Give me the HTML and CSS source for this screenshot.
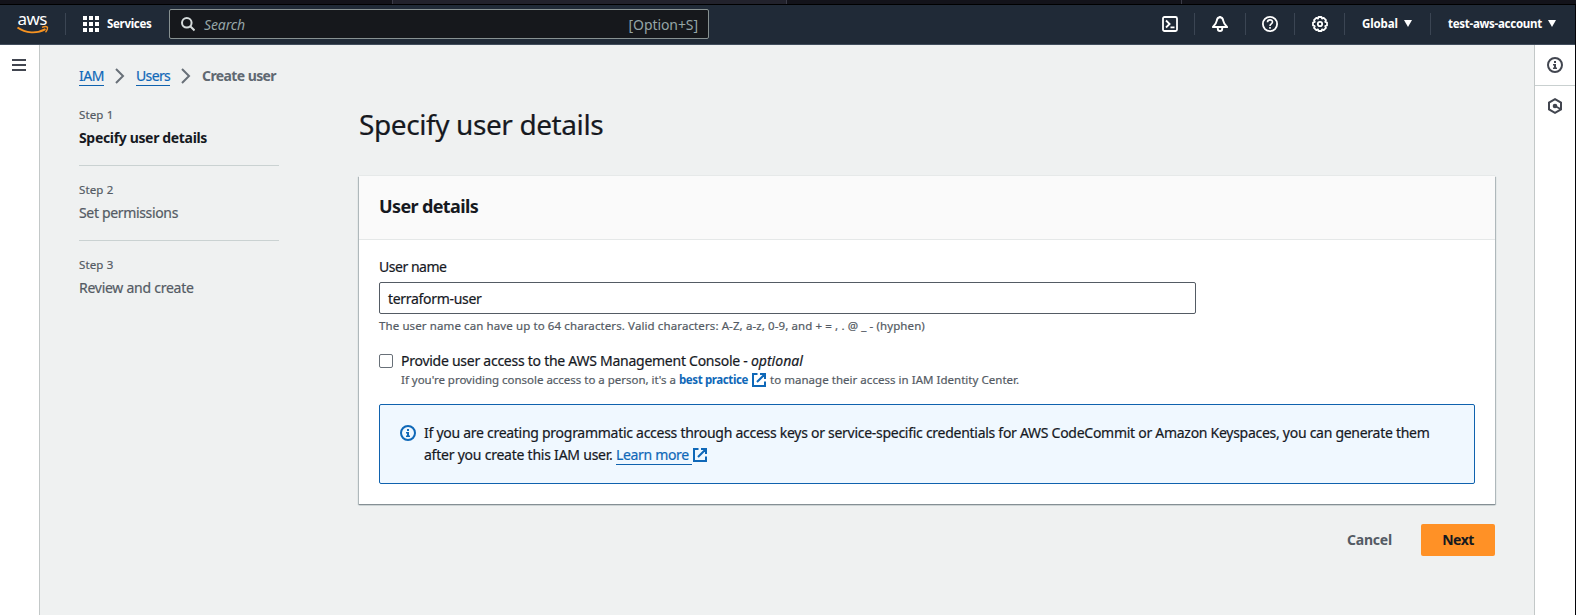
FILE: index.html
```
<!DOCTYPE html>
<html lang="en">
<head>
<meta charset="utf-8">
<title>Create user | IAM</title>
<link rel="stylesheet" href="styles.css">
</head>
<body>
<svg class="defs" width="0" height="0">
  <symbol id="external" viewBox="0 0 14 14"><path d="M5.5 1H1v12h12V8.5M8 1h5v5M13 1 5 9" fill="none" stroke="currentColor" stroke-width="2"/></symbol>
  <symbol id="info" viewBox="0 0 16 16"><circle cx="8" cy="8" r="7" fill="none" stroke="currentColor" stroke-width="2"/><path d="M7 4h2v2H7zM6 7h3v3.500h1V12H6v-1.500h1V8.500H6z" fill="currentColor"/></symbol>
  <symbol id="chevron" viewBox="0 0 10 16"><path d="m1 1 7 7-7 7" fill="none" stroke="currentColor" stroke-width="2"/></symbol>
</svg>
<div class="window">
  <div class="tabstrip"><i class="tab-active"></i><i class="tab-next"></i></div>
  <header class="nav">
    <svg class="logo" width="32" height="20" viewBox="0 0 32 20">
      <text class="logo-text" x="0.500" y="10.500" textLength="30">aws</text>
      <path d="M.5 13.500C8.500 19.300 20 20 28.500 15.200" fill="none" stroke="#f79321" stroke-width="1.900"/>
      <path d="M25 13.300c2.200-.8 4.700-.7 5.300-.2s-.1 3.600-1.800 5.200" fill="none" stroke="#f79321" stroke-width="1.400"/>
    </svg>
    <i class="rule rule-logo"></i>
    <div class="services">
      <svg width="16" height="16" viewBox="0 0 16 16" fill="#fff"><path d="M0 0h4v4H0zM6 0h4v4H6zM12 0h4v4h-4zM0 6h4v4H0zM6 6h4v4H6zM12 6h4v4h-4zM0 12h4v4H0zM6 12h4v4H6zM12 12h4v4h-4z"/></svg>
      <span class="services-text">Services</span>
    </div>
    <div class="search">
      <svg class="lens" width="14" height="15" viewBox="0 0 14 15" fill="none" stroke="#d5dbdb" stroke-width="2"><circle cx="5.800" cy="5.800" r="4.800"/><path d="m9 9 4.500 4.500"/></svg>
      <span class="search-text">Search</span>
      <span class="search-key">[Option+S]</span>
    </div>
    <div class="tools">
      <span class="tool"><svg width="16" height="16" viewBox="0 0 16 16" fill="none" stroke="#fff" stroke-width="1.800"><rect x="1" y="1" width="14" height="14" rx="1.500"/><path d="m4 4.500 3.600 3.500L4 11.500M8.500 11.300h4"/></svg></span>
      <span class="tool"><svg width="16" height="16" viewBox="0 0 16 16" fill="none" stroke="#fff" stroke-width="1.900" stroke-linejoin="round"><path d="M8 1.300c-2 0-3 1.600-3.300 3.600C4.400 7 3 9.100.9 11h14.200C13 9.100 11.600 7 11.300 4.900 11 2.900 10 1.300 8 1.300zM5.800 11v1.700c0 3 4.400 3 4.400 0V11M8 0v1"/></svg></span>
      <span class="tool"><svg width="16" height="16" viewBox="0 0 16 16" fill="none" stroke="#fff" stroke-width="1.800"><circle cx="8" cy="8" r="7.100"/><path d="M5.500 6.300c0-3.300 5-3.200 5-.2C10.500 8 8 7.800 8 9.900M8 11v1.800" stroke-width="1.600"/></svg></span>
      <span class="tool"><svg width="16" height="16" viewBox="0 0 16 16" fill="none" stroke="#fff"><path stroke-width="1.800" stroke-linejoin="round" d="M6.500 1h3l.5 1.600 1.700-.8 2.300 2.400-.8 1.600 1.800.7v3l-1.800.7.8 1.700-2.300 2.300-1.700-.8-.5 1.600h-3L6 13.400l-1.700.8L2 11.900l.8-1.700L1 9.500v-3l1.800-.7L2 4.200l2.300-2.400 1.700.8z"/><circle cx="8" cy="8" r="2.200" stroke-width="1.800"/></svg></span>
      <span class="region"><span class="region-text">Global</span><svg width="8" height="7" viewBox="0 0 8 7"><path d="M0 0h8L4 7z" fill="#fff"/></svg></span>
      <span class="account"><span class="account-text">test-aws-account</span><svg width="8" height="7" viewBox="0 0 8 7"><path d="M0 0h8L4 7z" fill="#fff"/></svg></span>
    </div>
  </header>
  <div class="body">
    <aside class="left-rail"><svg width="14" height="12" viewBox="0 0 14 12" fill="#424650"><path d="M0 0h14v2H0zM0 5h14v2H0zM0 10h14v2H0z"/></svg></aside>
    <main class="main">
      <nav class="crumbs">
        <a class="crumb crumb-iam">IAM</a>
        <svg class="sep" width="10" height="16"><use href="#chevron"/></svg>
        <a class="crumb crumb-users">Users</a>
        <svg class="sep" width="10" height="16"><use href="#chevron"/></svg>
        <span class="crumb-current">Create user</span>
      </nav>
      <div class="wizard">
        <ol class="steps">
          <li class="step"><div class="step-no">Step 1</div><div class="step-name active">Specify user details</div></li>
          <li class="step"><div class="step-no">Step 2</div><div class="step-name">Set permissions</div></li>
          <li class="step"><div class="step-no">Step 3</div><div class="step-name review">Review and create</div></li>
        </ol>
        <div class="form">
          <h1 class="title">Specify user details</h1>
          <section class="card">
            <div class="card-head"><h2 class="card-title">User details</h2></div>
            <div class="card-body">
              <label class="label">User name</label>
              <div class="input"><span>terraform-user</span></div>
              <div class="hint">The user name can have up to 64 characters. Valid characters: A-Z, a-z, 0-9, and + = , . @ _ - (hyphen)</div>
              <div class="check">
                <i class="box"></i>
                <div>
                  <div class="check-label">Provide user access to the AWS Management Console - <em>optional</em></div>
                  <div class="check-desc">If you're providing console access to a person, it's a <a class="best">best practice</a><svg class="ext" width="14" height="14"><use href="#external"/></svg><span class="desc-end">to manage their access in IAM Identity Center.</span></div>
                </div>
              </div>
              <div class="alert">
                <svg class="alert-icon" width="16" height="16"><use href="#info"/></svg>
                <div><div class="alert-one">If you are creating programmatic access through access keys or service-specific credentials for AWS CodeCommit or Amazon Keyspaces, you can generate them</div>
                <div class="alert-two"><span class="after">after you create this IAM user. </span><a class="learn">Learn more </a><svg width="14" height="14"><use href="#external"/></svg></div></div>
              </div>
            </div>
          </section>
          <div class="actions"><a class="cancel">Cancel</a><a class="next">Next</a></div>
        </div>
      </div>
    </main>
    <aside class="right-rail">
      <div class="rail-item"><svg width="16" height="16"><use href="#info"/></svg></div>
      <div class="rail-item last"><svg width="16" height="16" viewBox="0 0 16 16"><path d="M8 1.200 14 4.600v6.800L8 14.800 2 11.400V4.600z" fill="none" stroke="currentColor" stroke-width="2"/><circle cx="8" cy="8" r="2.300" fill="currentColor"/><path d="m8 8 5.500 3" stroke="currentColor" stroke-width="1.800"/></svg></div>
    </aside>
  </div>
</div>
</body>
</html>
```
FILE: styles.css
```
* { box-sizing: border-box; }
body { margin: 0; font: 14px/22px "Noto Sans", "Open Sans", sans-serif; color: #16191f; background: #040409; -webkit-text-stroke: .2px; }
svg { display: block; flex: none; }
h1, h2, ol { margin: 0; padding: 0; }
ol { list-style: none; }
.defs { position: absolute; }
.window { display: flex; flex-direction: column; width: 1576px; height: 615px; overflow: hidden; white-space: nowrap; }

.tabstrip { display: flex; flex: none; height: 5px; background: #13131a; border-bottom: 1px solid #000; padding-left: 392px; }
.tab-active { width: 395px; background: #22222c; border: solid #3c3c48; border-width: 0 1px; }
.tab-next { width: 395px; border-right: 1px solid #3c3c48; }

.nav { display: flex; flex: none; align-items: center; height: 40px; width: 1575px; padding: 0 19px 2px 17px; background: #202a37; border-bottom: 1px solid #414d5c; color: #fff; font-size: 11.5px; font-weight: 700; -webkit-text-stroke: 0; }
.logo { overflow: visible; }
.logo-text { font: 400 17px "Noto Sans", sans-serif; fill: #fff; }
.rule { width: 1px; height: 22px; background: #3b4553; }
.rule-logo { margin: 0 17px 0 16px; }
.services { display: flex; align-items: center; gap: 8px; width: 86px; }
.services-text { letter-spacing: -.3px; }
.search { display: flex; align-items: center; width: 540px; height: 30px; padding: 0 10px 0 11px; background: #16181c; border: 1px solid #879191; border-radius: 2px; color: #95a5a6; font-size: 14px; font-weight: 400; }
.lens { margin-top: 1px; }
.search-text { margin: 2px auto 0 9px; font-style: italic; letter-spacing: -.12px; }
.search-key { margin-top: 2px; letter-spacing: -.08px; }
.tools { display: flex; margin-left: auto; height: 22px; }
.tool { display: flex; align-items: center; width: 50px; padding-left: 17px; border-right: 1px solid #3b4553; }
.tool:first-child { padding-left: 16px; width: 49px; }
.tool:nth-child(2) { width: 51px; }
.tool:nth-child(3) { width: 49px; padding-left: 16px; }
.region, .account { display: flex; align-items: center; gap: 6px; }
.region { width: 86px; padding-left: 17px; border-right: 1px solid #3b4553; }
.account { padding-left: 17px; }
.region-text { letter-spacing: -.13px; }
.account-text { letter-spacing: -.27px; }

.body { display: flex; flex: 1; width: 1575px; }
.left-rail { width: 40px; padding: 14px 0 0 12px; background: #fff; border-right: 1px solid #c3c8c8; }
.main { flex: 1; padding: 20px 39px 0; background: #eff1f1; }
.right-rail { width: 41px; background: #fff; border-left: 1px solid #c3c8c8; color: #424650; }
.rail-item { display: flex; align-items: center; justify-content: center; height: 41px; border-bottom: 1px solid #c9d0d0; }
.rail-item.last { height: 39px; border: 0; }

.crumbs { display: flex; height: 22px; }
.crumb { height: 21px; border-bottom: 1px solid #0f62ae; color: #0f68b8; }
.crumb-iam { width: 25px; letter-spacing: -.46px; }
.crumb-users { width: 34px; letter-spacing: -.64px; }
.sep { margin: 3px 11px 0; color: #687078; }
.crumb-current { color: #606871; font-weight: 700; letter-spacing: -.59px; -webkit-text-stroke: 0; }

.wizard { display: flex; padding-top: 19px; }
.steps { width: 200px; margin-right: 80px; }
.step { height: 75px; padding-top: 1px; color: #545b64; }
.step:not(:last-child) .step-name { border-bottom: 1px solid #cad2d2; }
.step-no { font-size: 11.5px; line-height: 16px; letter-spacing: .14px; }
.step-name { height: 39px; margin-top: 4px; letter-spacing: -.34px; }
.step-name.active { color: #16191f; font-weight: 700; -webkit-text-stroke: 0; }
.step-name.review { letter-spacing: -.26px; }

.form { width: 1136px; }
.title { font-size: 28px; font-weight: 400; line-height: 36px; letter-spacing: -.4px; }
.card { height: 328px; margin-top: 34px; background: #fff; box-shadow: 0 1px 1px #858f94, 0 -1px 0 #e6e9e9, 1px 1px 1px #b9c1c3, -1px 1px 1px #b9c1c3; }
.card-head { height: 64px; padding: 19px 20px; background: #fafafa; border-bottom: 1px solid #e5e8e8; }
.card-title { font-size: 18px; line-height: 22px; letter-spacing: -.63px; -webkit-text-stroke: 0; }
.card-body { padding: 16px 20px 20px; }
.label { display: block; letter-spacing: -.47px; }
.input { width: 817px; height: 32px; margin-top: 4px; padding: 5px 8px; border: 1px solid #545b64; border-radius: 2px; letter-spacing: -.31px; }
.hint { margin-top: 4px; font-size: 11.5px; line-height: 16px; color: #545b64; letter-spacing: .105px; }
.check { display: flex; gap: 8px; margin-top: 16px; }
.box { width: 14px; height: 14px; margin-top: 4px; border: 1px solid #687078; border-radius: 2px; }
.check-label { letter-spacing: -.26px; }
.check-label em { letter-spacing: .02px; }
.check-desc { display: flex; white-space: pre; font-size: 11.5px; line-height: 16px; color: #545b64; letter-spacing: -.016px; }
.best { color: #0f68b8; font-weight: 700; letter-spacing: -.39px; -webkit-text-stroke: 0; }
.ext { margin: 1px 4px 0; color: #0f68b8; }
.desc-end { letter-spacing: .03px; }
.alert { display: flex; gap: 8px; height: 80px; margin-top: 16px; padding: 17px 20px; background: #f0f8ff; border: 1px solid #0f62ae; border-radius: 2px; }
.alert-icon { margin-top: 3px; color: #0f68b8; }
.alert-one { letter-spacing: -.275px; }
.alert-two { display: flex; white-space: pre; letter-spacing: -.23px; }
.alert-two svg { margin: 4px 0 0 1px; color: #0f68b8; }
.learn { height: 21px; border-bottom: 1px solid #0f62ae; color: #0f68b8; letter-spacing: -.34px; }
.actions { display: flex; justify-content: flex-end; margin-top: 20px; font-weight: 700; line-height: 32px; -webkit-text-stroke: 0; }
.cancel { margin-right: 29px; color: #545b64; letter-spacing: -.2px; }
.next { width: 74px; background: #ff9126; border-radius: 2px; text-align: center; letter-spacing: -.53px; }
```
